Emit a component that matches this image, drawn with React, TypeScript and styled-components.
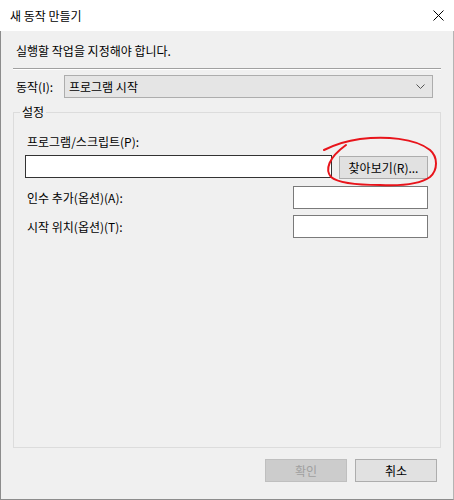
import React from "react";
import styled, { createGlobalStyle } from "styled-components";

const GlobalStyle = createGlobalStyle`
  html, body {
    margin: 0;
    padding: 0;
    background: #fff;
  }
  body {
    font-family: "Noto Sans CJK KR", "Malgun Gothic", sans-serif;
    font-size: 12px;
    color: #000;
  }
  * {
    box-sizing: border-box;
  }
`;

// 새 작업 다이얼로그
const App: React.FC = () => {
  return (
    <>
      <GlobalStyle />
      <Window>
        <TitleBar>
          <Title>새 동작 만들기</Title>
          <CloseButton aria-label="닫기">
            <svg width="11" height="11" viewBox="0 0 11 11">
              <path d="M0.5 0.5 L10.5 10.5 M10.5 0.5 L0.5 10.5" stroke="#000" strokeWidth="1" fill="none" />
            </svg>
          </CloseButton>
        </TitleBar>
        <Body>
          <Description>실행할 작업을 지정해야 합니다.</Description>
          <Separator />
          <ActionRow>
            <ActionLabel>동작(I):</ActionLabel>
            <Combo>
              <span>프로그램 시작</span>
              <svg width="9" height="5" viewBox="0 0 9 5">
                <polyline points="0.5,0.5 4.5,4.5 8.5,0.5" stroke="#555" strokeWidth="1" fill="none" />
              </svg>
            </Combo>
          </ActionRow>
          <Group>
            <Legend>설정</Legend>
            <GroupBody>
              <FieldLabel>프로그램/스크립트(P):</FieldLabel>
              <ScriptRow>
                <TextBox $dark />
                <BrowseButton>찾아보기(R)...</BrowseButton>
              </ScriptRow>
              <OptionRow $gap={7}>
                <FieldLabel>인수 추가(옵션)(A):</FieldLabel>
                <TextBox $width={135} />
              </OptionRow>
              <OptionRow $gap={6}>
                <FieldLabel>시작 위치(옵션)(T):</FieldLabel>
                <TextBox $width={135} />
              </OptionRow>
            </GroupBody>
          </Group>
          <Footer>
            <DialogButton disabled>확인</DialogButton>
            <DialogButton>취소</DialogButton>
          </Footer>
        </Body>
        {/* 빨간 펜 표시 */}
        <Annotation viewBox="0 0 454 500">
          <path
            d="M324 150 C332 146 345 141 360 139 C385 136 415 138 430 150 C438 157 438 170 430 177 C420 184 400 186 380 185 C355 185 338 183 331 177 C325 170 328 158 346 145"
            stroke="#e8141b"
            strokeWidth="2"
            strokeLinecap="round"
            fill="none"
          />
        </Annotation>
      </Window>
    </>
  );
};
export default App;

const Window = styled.div`
  position: relative;
  width: 454px;
  height: 500px;
  display: flex;
  flex-direction: column;
`;

const TitleBar = styled.div`
  height: 31px;
  flex-shrink: 0;
  display: flex;
  align-items: center;
  justify-content: space-between;
  padding-left: 10px;
  background: #fff;
`;

const Title = styled.span`
  line-height: 16px;
  margin-top: 1px;
`;

const CloseButton = styled.div`
  width: 30px;
  height: 31px;
  margin-right: 1px;
  display: flex;
  align-items: center;
  justify-content: center;
`;

const Body = styled.div`
  flex: 1;
  display: flex;
  flex-direction: column;
  background: #f0f0f0;
  border-left: 1px solid #8c8c8c;
  border-right: 1px solid #b4b4b4;
  border-bottom: 1px solid #8c8c8c;
  padding: 0 12px 17px 12px;
`;

const Description = styled.div`
  margin-top: 12px;
  padding-left: 3px;
  line-height: 16px;
`;

const Separator = styled.div`
  margin-top: 9px;
  height: 2px;
  border-top: 1px solid #a0a0a0;
  border-bottom: 1px solid #fff;
`;

const ActionRow = styled.div`
  margin-top: 5px;
  display: flex;
  align-items: center;
  padding: 0 8px 0 3px;
`;

const ActionLabel = styled.span`
  width: 48px;
  line-height: 16px;
`;

const Combo = styled.div`
  flex: 1;
  height: 23px;
  display: flex;
  align-items: center;
  justify-content: space-between;
  padding: 0 7px 0 4px;
  background: #e5e5e5;
  border: 1px solid #adadad;
  line-height: 16px;
`;

const Group = styled.fieldset`
  flex: 1;
  margin: 6px 0 0 0;
  padding: 0;
  min-width: 0;
  border: 1px solid #dcdcdc;
`;

const Legend = styled.legend`
  margin-left: 6px;
  padding: 0 2px;
  line-height: 16px;
`;

const GroupBody = styled.div`
  padding: 14px 12px 0 11px;
`;

const FieldLabel = styled.div`
  padding-left: 2px;
  line-height: 16px;
`;

const ScriptRow = styled.div`
  margin-top: 5px;
  display: flex;
  align-items: flex-start;
  gap: 7px;
`;

const OptionRow = styled.div<{ $gap: number }>`
  margin-top: ${(p) => p.$gap}px;
  display: flex;
  align-items: center;
  justify-content: space-between;
`;

const TextBox = styled.input<{ $dark?: boolean; $width?: number }>`
  ${(p) => (p.$width ? `width: ${p.$width}px;` : "flex: 1; min-width: 0;")}
  height: 23px;
  margin: 0;
  padding: 0 3px;
  background: #fff;
  border: 1px solid ${(p) => (p.$dark ? "#333" : "#7a7a7a")};
  font: inherit;
  outline: none;
`;

const BrowseButton = styled.button`
  width: 89px;
  height: 23px;
  margin-top: 1px;
  padding: 0;
  background: #e1e1e1;
  border: 1px solid #adadad;
  font: inherit;
  color: #000;
  line-height: 16px;
`;

const Footer = styled.div`
  margin-top: 11px;
  display: flex;
  justify-content: flex-end;
  gap: 8px;
  padding-right: 4px;
`;

const DialogButton = styled.button`
  width: 82px;
  height: 23px;
  padding: 0;
  background: #e1e1e1;
  border: 1px solid #adadad;
  font: inherit;
  color: #000;
  line-height: 16px;
  &:disabled {
    background: #cccccc;
    border-color: #bfbfbf;
    color: #a0a0a0;
  }
`;

const Annotation = styled.svg`
  position: absolute;
  left: 0;
  top: 0;
  width: 454px;
  height: 500px;
  pointer-events: none;
`;
